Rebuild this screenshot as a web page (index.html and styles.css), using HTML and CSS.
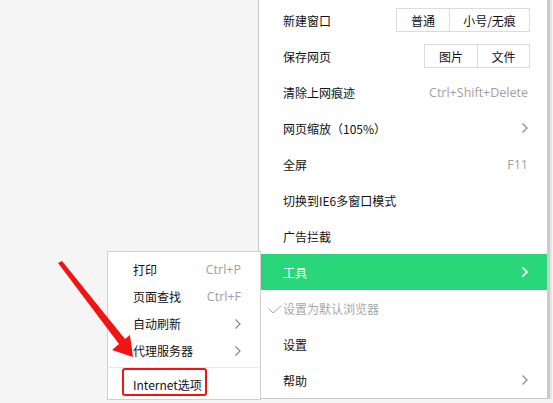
FILE: index.html
```html
<!DOCTYPE html>
<html>
<head>
  <title>菜单</title>
  <link rel="stylesheet" href="styles.css">
</head>
<body>

<div class="menu main-menu">
  <div class="item">
    <span>新建窗口</span>
    <div class="btn-group">
      <span class="btn w54">普通</span>
      <span class="btn w81">小号/无痕</span>
    </div>
  </div>
  <div class="item">
    <span>保存网页</span>
    <div class="btn-group">
      <span class="btn w54">图片</span>
      <span class="btn w52">文件</span>
    </div>
  </div>
  <div class="item">
    <span>清除上网痕迹</span>
    <span class="key">Ctrl+Shift+Delete</span>
  </div>
  <div class="item">
    <span>网页缩放（105%）</span>
    <svg class="arrow" width="6" height="10" viewBox="0 0 6 10"><polyline points="0.5,0.5 5,5 0.5,9.5" /></svg>
  </div>
  <div class="item">
    <span>全屏</span>
    <span class="key">F11</span>
  </div>
  <div class="item">
    <span>切换到IE6多窗口模式</span>
  </div>
  <div class="item">
    <span>广告拦截</span>
  </div>
  <div class="item active">
    <span>工具</span>
    <svg class="arrow" width="6" height="10" viewBox="0 0 6 10"><polyline points="0.5,0.5 5,5 0.5,9.5" /></svg>
  </div>
  <div class="item disabled">
    <svg class="check" width="14" height="9" viewBox="0 0 14 9"><polyline points="0.5,3.5 5,8 13.5,0.5" /></svg>
    <span>设置为默认浏览器</span>
  </div>
  <div class="item">
    <span>设置</span>
  </div>
  <div class="item">
    <span>帮助</span>
    <svg class="arrow" width="6" height="10" viewBox="0 0 6 10"><polyline points="0.5,0.5 5,5 0.5,9.5" /></svg>
  </div>
</div>

<div class="menu sub-menu">
  <div class="sub-item">
    <span>打印</span>
    <span class="key">Ctrl+P</span>
  </div>
  <div class="sub-item">
    <span>页面查找</span>
    <span class="key">Ctrl+F</span>
  </div>
  <div class="sub-item">
    <span>自动刷新</span>
    <svg class="arrow" width="6" height="10" viewBox="0 0 6 10"><polyline points="0.5,0.5 5,5 0.5,9.5" /></svg>
  </div>
  <div class="sub-item">
    <span>代理服务器</span>
    <svg class="arrow" width="6" height="10" viewBox="0 0 6 10"><polyline points="0.5,0.5 5,5 0.5,9.5" /></svg>
  </div>
  <div class="divider"></div>
  <div class="sub-item">
    <span class="mark">Internet选项</span>
  </div>
</div>

<svg class="pointer" width="553" height="403" viewBox="0 0 553 403">
  <polygon points="58,263 62,261 125,339 130,335 133,357 112,350 119,344" fill="#f01414" />
</svg>

</body>
</html>
```

FILE: styles.css
```css
body {
  margin: 0;
  width: 553px;
  height: 403px;
  overflow: hidden;
  background-color: #f5f5f5;
  font-family: "Microsoft YaHei", "Noto Sans CJK SC", sans-serif;
  font-size: 12px;
  color: #111;
  position: relative;
}

.menu {
  position: absolute;
  background-color: #fff;
  box-sizing: border-box;
}

.main-menu {
  left: 258px;
  top: -3px;
  width: 292px;
  padding-top: 4px;
  border: 1px solid #c9c9c9;
  border-right: 3px solid #cbcbcb;
  box-shadow: 2px 0 0 #e6e6e6;
}

.item {
  height: 36px;
  display: flex;
  align-items: center;
  justify-content: space-between;
  padding: 0 19px 0 24px;
  position: relative;
}

.item.active {
  background-color: #2ad67a;
  color: #fff;
}

.item.active .arrow polyline {
  stroke: #fff;
  stroke-width: 1.6;
}

.item.disabled {
  color: #a8a8a8;
  justify-content: flex-start;
}

.check {
  position: absolute;
  left: 9px;
  top: 15px;
}

.check polyline {
  fill: none;
  stroke: #a8a8a8;
  stroke-width: 1;
}

.btn-group {
  display: flex;
  margin-right: -2px;
}

.btn {
  height: 24px;
  box-sizing: border-box;
  border: 1px solid #dcdcdc;
  display: flex;
  align-items: center;
  justify-content: center;
  color: #111;
}

.btn + .btn {
  border-left: none;
}

.w54 { width: 54px; }
.w81 { width: 80px; }
.w52 { width: 52px; }

.key {
  color: #a0a0a0;
  font-family: "Segoe UI", "Open Sans", "Noto Sans", sans-serif;
  font-size: 12.5px;
}

.arrow polyline {
  fill: none;
  stroke: #888;
  stroke-width: 1.2;
}

.sub-menu {
  left: 107px;
  top: 251px;
  width: 154px;
  height: 149px;
  border: 1px solid #cfcfcf;
  padding-top: 4px;
}

.sub-item {
  height: 27px;
  display: flex;
  align-items: center;
  justify-content: space-between;
  padding: 0 19px 0 25px;
}

.divider {
  height: 1px;
  background-color: #e8e8e8;
  margin: 3px 1px 3px 1px;
}

.mark {
  position: relative;
}

.mark::after {
  content: "";
  position: absolute;
  left: -11px;
  right: -5px;
  top: -8px;
  bottom: -3px;
  border: 2px solid #f01414;
  border-radius: 3px;
}

.pointer {
  position: absolute;
  left: 0;
  top: 0;
}
```
